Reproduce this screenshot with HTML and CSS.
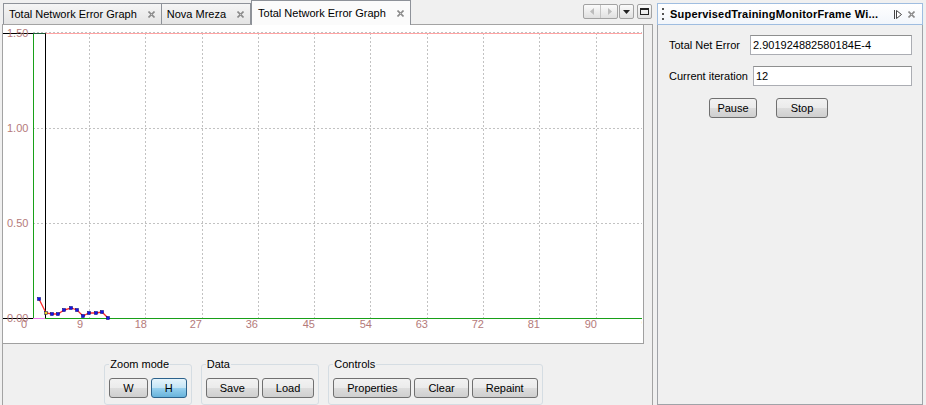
FILE: index.html
```html
<!DOCTYPE html>
<html lang="en">
<head>
    <meta charset="UTF-8">
    <title>Total Network Error Graph</title>
    <link rel="stylesheet" href="styles.css">
</head>
<body>
    <svg class="defs" width="0" height="0">
        <symbol id="close" viewBox="0 0 7 7">
            <path d="M0.5 0.5 L6.5 6.5 M6.5 0.5 L0.5 6.5" stroke="#8a8a8a" stroke-width="1.6" fill="none"/>
            <rect x="3" y="3" width="1" height="1" fill="#c8c8c8"/>
        </symbol>
    </svg>

    <div class="window">
        <section class="editor">
            <div class="tabbar">
                <div class="tab">Total Network Error Graph <svg class="x"><use href="#close"/></svg></div>
                <div class="tab">Nova Mreza <svg class="x"><use href="#close"/></svg></div>
                <div class="tab active">Total Network Error Graph <svg class="x"><use href="#close"/></svg></div>

                <div class="tab-tools">
                    <span class="tool-pair">
                        <span class="tool-half">
                            <svg width="5" height="7"><path d="M4 0 V7 L0 3.5 Z" fill="#bcbcbc"/></svg>
                        </span>
                        <span class="tool-half">
                            <svg width="5" height="7"><path d="M1 0 V7 L5 3.5 Z" fill="#bcbcbc"/></svg>
                        </span>
                    </span>
                    <span class="tool">
                        <svg width="7" height="4"><path d="M0 0 H7 L3.5 4 Z" fill="#222"/></svg>
                    </span>
                    <span class="tool gap">
                        <svg width="9" height="7"><rect x="0.5" y="0.5" width="8" height="6" fill="none" stroke="#222"/><rect x="0" y="0" width="9" height="2" fill="#222"/></svg>
                    </span>
                </div>
            </div>

            <div class="doc">
                <div class="chart">
                    <svg class="plot" width="639" height="318" viewBox="0 0 639 318">
                        <g stroke="#c2c2c2" stroke-dasharray="2 2" fill="none">
                            <path d="M30 7.5 H639 M30 103.5 H639 M30 198.5 H639"/>
                            <path d="M86.5 8 V293 M142.5 8 V293 M199.5 8 V293 M255.5 8 V293 M311.5 8 V293 M367.5 8 V293 M424.5 8 V293 M480.5 8 V293 M536.5 8 V293 M593.5 8 V293"/>
                        </g>
                        <path d="M42 8.5 H639" stroke="#ffa4a4" fill="none"/>
                        <path d="M30.5 8 V293" stroke="#18a018" fill="none"/>
                        <path d="M0 8.5 H42.5 V293" stroke="#000" fill="none"/>
                        <path d="M30 8.5 H42" stroke="#1c5a36" fill="none"/>
                        <path d="M0 293.5 H30" stroke="#000" fill="none"/>
                        <path d="M30 293.5 H42" stroke="#e878e8" fill="none"/>
                        <path d="M42 293.5 H639" stroke="#18a018" fill="none"/>

                        <polyline points="36,274 43,288 49,289 55,289 61,285 68,283 74,285 80,291 86,288 93,288 99,287 105,293" stroke="#ff2a2a" stroke-width="1.3" fill="none"/>
                        <g fill="#1414e6" stroke="#00006a" stroke-width="0.5">
                            <rect x="34.5" y="272.5" width="3" height="3"/>
                            <rect x="41.5" y="286.5" width="3" height="3" fill="#e8d020"/>
                            <rect x="47.5" y="287.5" width="3" height="3"/>
                            <rect x="53.5" y="287.5" width="3" height="3"/>
                            <rect x="59.5" y="283.5" width="3" height="3"/>
                            <rect x="66.5" y="281.5" width="3" height="3"/>
                            <rect x="72.5" y="283.5" width="3" height="3"/>
                            <rect x="78.5" y="289.5" width="3" height="3"/>
                            <rect x="84.5" y="286.5" width="3" height="3"/>
                            <rect x="91.5" y="286.5" width="3" height="3"/>
                            <rect x="97.5" y="285.5" width="3" height="3"/>
                            <rect x="103.5" y="291.5" width="3" height="3"/>
                        </g>

                        <g class="ticks">
                            <text x="4" y="12">1.50</text>
                            <text x="4" y="107">1.00</text>
                            <text x="4" y="202">0.50</text>
                            <text x="4" y="297">0.00</text>
                        </g>
                        <g class="ticks" text-anchor="end">
                            <text x="24" y="303">0</text>
                            <text x="80" y="303">9</text>
                            <text x="144" y="303">18</text>
                            <text x="199" y="303">27</text>
                            <text x="255" y="303">36</text>
                            <text x="312" y="303">45</text>
                            <text x="369" y="303">54</text>
                            <text x="425" y="303">63</text>
                            <text x="481" y="303">72</text>
                            <text x="537" y="303">81</text>
                            <text x="594" y="303">90</text>
                        </g>
                        <g class="ticks">
                            <text x="638.5" y="303">99</text>
                        </g>
                    </svg>
                </div>

                <div class="toolbar">
                    <fieldset class="group">
                        <legend>Zoom mode</legend>
                        <button class="btn">W</button>
                        <button class="btn on">H</button>
                    </fieldset>
                    <fieldset class="group">
                        <legend>Data</legend>
                        <button class="btn">Save</button>
                        <button class="btn">Load</button>
                    </fieldset>
                    <fieldset class="group">
                        <legend>Controls</legend>
                        <button class="btn">Properties</button>
                        <button class="btn">Clear</button>
                        <button class="btn">Repaint</button>
                    </fieldset>
                </div>
            </div>
        </section>

        <aside class="side">
            <div class="side-head">
                <svg class="grip" width="2" height="12">
                    <rect x="0" y="0" width="2" height="2" fill="#555"/>
                    <rect x="0" y="5" width="2" height="2" fill="#555"/>
                    <rect x="0" y="10" width="2" height="2" fill="#555"/>
                </svg>
                <span class="side-title">SupervisedTrainingMonitorFrame Wi...</span>
                <svg class="side-min" width="8" height="9">
                    <path d="M0.5 0 V9" stroke="#444"/>
                    <path d="M2.5 0.5 L7.5 4.5 L2.5 8.5 Z" fill="#fff" stroke="#444"/>
                </svg>
                <svg class="x"><use href="#close"/></svg>
            </div>
            <div class="side-body">
                <div class="field-row">
                    <label class="lbl lbl-err">Total Net Error</label>
                    <input class="field" type="text" value="2.901924882580184E-4">
                </div>
                <div class="field-row">
                    <label class="lbl lbl-iter">Current iteration</label>
                    <input class="field" type="text" value="12">
                </div>
                <div class="btn-row">
                    <button class="btn pause">Pause</button>
                    <button class="btn stop">Stop</button>
                </div>
            </div>
        </aside>
    </div>
</body>
</html>
```

FILE: styles.css
```css
body {
    margin: 0;
    background-color: #f0f0f0;
    font-family: "Liberation Sans", Arial, sans-serif;
    font-size: 11px;
    color: #000;
    height: 405px;
    overflow: hidden;
}
.defs {
    position: absolute;
}
.window {
    display: flex;
    height: 405px;
}

/* editor side */
.editor {
    width: 653px;
    display: flex;
    flex-direction: column;
}
.tabbar {
    height: 25px;
    display: flex;
    align-items: flex-end;
    padding-left: 3px;
}
.tab {
    box-sizing: border-box;
    height: 21px;
    display: flex;
    align-items: center;
    gap: 11px;
    padding: 0 6px 0 5px;
    border: 1px solid #8e9299;
    border-bottom: none;
    margin-right: -1px;
    background: linear-gradient(#f5f5f5, #e4e4e4);
    white-space: nowrap;
}
.tab.active {
    height: 25px;
    margin: 0 0 -1px 1px;
    padding-left: 6px;
    background: #fbfbfb;
    position: relative;
    z-index: 1;
}
.x {
    width: 7px;
    height: 7px;
    flex: none;
}
.tab-tools {
    margin-left: auto;
    margin-right: 1px;
    align-self: flex-start;
    margin-top: 4px;
    display: flex;
}
.tool-pair, .tool {
    box-sizing: border-box;
    height: 15px;
    border: 1px solid #a2a2a2;
    border-radius: 2px;
    background: linear-gradient(#fbfbfb, #e0e0e0);
    display: flex;
}
.tool-pair {
    width: 35px;
    margin-right: 1px;
}
.tool-half {
    flex: 1;
    display: flex;
    align-items: center;
    justify-content: center;
}
.tool-half + .tool-half {
    border-left: 1px solid #c4c4c4;
}
.tool {
    width: 15px;
    align-items: center;
    justify-content: center;
}
.tool.gap {
    margin-left: 3px;
}

.doc {
    flex: 1;
    margin-left: 2px;
    border: 1px solid #a3a3a3;
    border-bottom: none;
    display: flex;
    flex-direction: column;
}
.chart {
    box-sizing: border-box;
    height: 319px;
    margin-right: 8px;
    background: #fff;
    border-right: 1px solid #a0a0a0;
    border-bottom: 1px solid #a0a0a0;
    overflow: hidden;
}
.plot {
    display: block;
}
.ticks {
    font-family: "Liberation Sans", Arial, sans-serif;
    font-size: 11px;
    fill: #b47a7a;
}

.toolbar {
    display: flex;
    justify-content: center;
    gap: 9px;
    padding-top: 14px;
    margin-right: 8px;
}
.group {
    margin: 0;
    border: 1px solid #d5dde3;
    border-radius: 3px;
    padding: 7px 4px 6px;
    display: flex;
    gap: 3px;
    min-width: 0;
}
.group legend {
    padding: 0 1px;
    font-size: 11px;
    line-height: 13px;
}
.btn {
    box-sizing: border-box;
    height: 20px;
    padding: 0 13px;
    font-family: "Liberation Sans", Arial, sans-serif;
    font-size: 11px;
    color: #000;
    border: 1px solid #707070;
    border-radius: 3px;
    background: linear-gradient(#f2f2f2 0%, #ebebeb 50%, #dddddd 50%, #cfcfcf 100%);
}
.btn.on {
    border-color: #2c628b;
    background: linear-gradient(#e5f4fc 0%, #c4e5f6 50%, #98d1ef 50%, #68b3db 100%);
}

/* monitor panel */
.side {
    box-sizing: border-box;
    width: 266px;
    margin: 3px 0 0 4px;
    border: 1px solid #a0a3a8;
    border-top: none;
    display: flex;
    flex-direction: column;
}
.side-head {
    box-sizing: border-box;
    height: 22px;
    margin: 0 -1px;
    border: 1px solid #9fbde0;
    background: linear-gradient(#ffffff, #f2f6fb);
    display: flex;
    align-items: center;
    padding: 0 7px 0 4px;
}
.side-title {
    flex: 1;
    margin-left: 6px;
    font-weight: bold;
    font-size: 11px;
    letter-spacing: 0.2px;
    white-space: nowrap;
}
.side-min {
    margin-right: 6px;
}
.side-body {
    padding: 10px 10px 0 11px;
}
.field-row {
    display: flex;
    align-items: center;
    height: 20px;
}
.field-row + .field-row {
    margin-top: 11px;
}
.lbl {
    flex: none;
    white-space: nowrap;
}
.lbl-err {
    width: 81px;
}
.lbl-iter {
    width: 84px;
}
.field {
    box-sizing: border-box;
    flex: 1;
    min-width: 0;
    height: 20px;
    margin: 0;
    padding: 0 2px;
    border: 1px solid #abadb3;
    border-top-color: #8e8f8f;
    background: #fff;
    font-family: "Liberation Sans", Arial, sans-serif;
    font-size: 11px;
    color: #000;
}
.btn-row {
    display: flex;
    gap: 19px;
    margin-top: 12px;
    padding-left: 40px;
}
.btn.pause {
    width: 48px;
    padding: 0;
}
.btn.stop {
    width: 52px;
    padding: 0;
}
```
